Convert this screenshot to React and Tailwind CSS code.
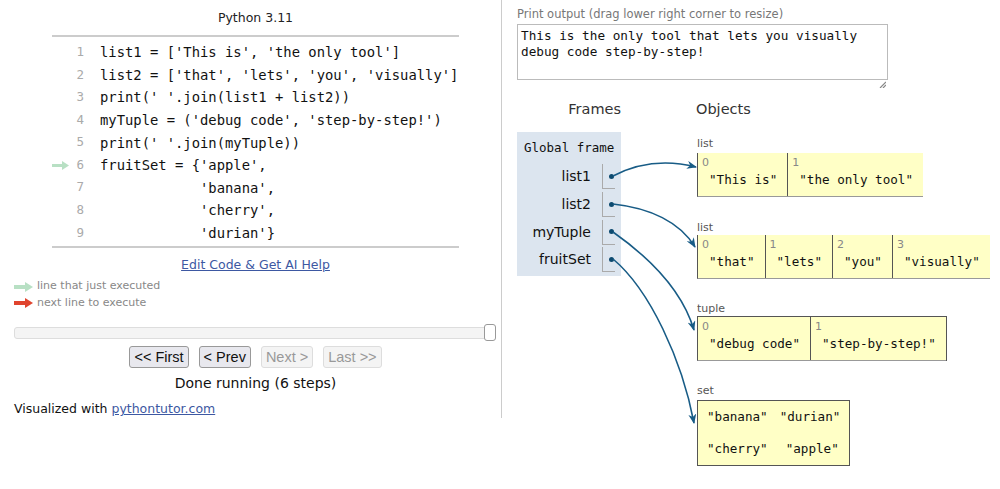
import React from 'react';

const mono = { fontFamily: '"DejaVu Sans Mono", "Liberation Mono", monospace' };
const sans = { fontFamily: '"DejaVu Sans", Verdana, sans-serif' };
const arial = { fontFamily: '"Liberation Sans", Arial, sans-serif' };

const code = [
  "list1 = ['This is', 'the only tool']",
  "list2 = ['that', 'lets', 'you', 'visually']",
  "print(' '.join(list1 + list2))",
  "myTuple = ('debug code', 'step-by-step!')",
  "print(' '.join(myTuple))",
  "fruitSet = {'apple',",
  "            'banana',",
  "            'cherry',",
  "            'durian'}",
];

function Arrow({ color }) {
  return (
    <svg width="19" height="10" viewBox="0 0 19 10" className="shrink-0">
      <rect x="0" y="3" width="12" height="4" fill={color} />
      <path d="M11 0 L19 5 L11 10 Z" fill={color} />
    </svg>
  );
}

function ListBox({ items }) {
  return (
    <div className="flex bg-[#ffffc6] border-l border-b border-l-[#555] border-b-[#999] w-fit">
      {items.map((v, i) => (
        <div key={i} className="border-r border-[#555] last:border-r-0 pl-[4px] pr-[10px] pt-[3px] pb-[8px]">
          <div className="text-[11px] leading-[13px] text-[#888]" style={sans}>{i}</div>
          <div className="text-[12.6px] leading-[16px] text-[#111] pl-[7px] mt-[3px]" style={mono}>{v}</div>
        </div>
      ))}
    </div>
  );
}

export default function App() {
  const rows = ['list1', 'list2', 'myTuple', 'fruitSet'];
  return (
    <div className="relative w-[1000px] h-[489px] bg-white overflow-hidden flex" style={sans}>
      {/* left panel */}
      <div className="w-[502px] h-[418px] border-r border-[#ccc] pl-[14px] pr-[4px] flex flex-col items-center">
        <div className="text-[12.5px] text-[#222] mt-[10px] leading-[16px]">Python 3.11</div>
        <div className="w-[407px] mt-[9px] border-t-2 border-b-2 border-[#ccc] pt-[4px] pb-[2px]">
          {code.map((line, i) => (
            <div key={i} className="flex items-center h-[22.6px]">
              <div className="w-[18px] flex-none flex justify-end pr-[1px]">
                {i === 5 && (
                  <svg width="17" height="9" viewBox="0 0 17 9">
                    <rect x="0" y="3" width="11" height="3" fill="#b8e0c4" />
                    <path d="M10 0 L17 4.5 L10 9 Z" fill="#b8e0c4" />
                  </svg>
                )}
              </div>
              <div className="w-[14px] flex-none text-right text-[12.5px] text-[#aaa]" style={mono}>{i + 1}</div>
              <pre className="flex-none ml-[16px] text-[13.85px] text-[#111] leading-[20px]" style={mono}>{line}</pre>
            </div>
          ))}
        </div>
        <a className="mt-[9px] text-[12.5px] text-[#3d58a2] underline leading-[16px]" href="#">Edit Code &amp; Get AI Help</a>
        <div className="self-start mt-[5px] text-[11px] text-[#888] leading-[16.5px]">
          <div className="flex items-center gap-[4px]"><Arrow color="#b8e0c4" />line that just executed</div>
          <div className="flex items-center gap-[4px]"><Arrow color="#e0442e" />next line to execute</div>
        </div>
        <div className="self-stretch mt-[13px] relative h-[17px] flex items-center">
          <div className="h-[12px] w-[474px] rounded-[3px] border border-[#ddd] bg-[#f4f4f4]"></div>
          <div className="absolute left-[470px] top-0 w-[12px] h-[17px] rounded-[3px] border border-[#999] bg-white"></div>
        </div>
        <div className="flex gap-[10px] mt-[5px]" style={arial}>
          <button className="h-[22px] px-[4px] rounded-[3px] border border-[#999] bg-[#e8e8ee] text-[14.5px] text-[#111]">&lt;&lt; First</button>
          <button className="h-[22px] px-[4px] rounded-[3px] border border-[#999] bg-[#e8e8ee] text-[14.5px] text-[#111]">&lt; Prev</button>
          <button className="h-[22px] px-[4px] rounded-[3px] border border-[#ddd] bg-[#f4f4f4] text-[14.5px] text-[#999]">Next &gt;</button>
          <button className="h-[22px] px-[4px] rounded-[3px] border border-[#ddd] bg-[#f4f4f4] text-[14.5px] text-[#999]">Last &gt;&gt;</button>
        </div>
        <div className="mt-[5px] text-[14px] text-[#111] leading-[20px]">Done running (6 steps)</div>
        <div className="self-start mt-[8px] text-[12.5px] text-[#111] leading-[16px]">
          Visualized with <a className="text-[#3d58a2] underline" href="#">pythontutor.com</a>
        </div>
      </div>

      {/* right panel */}
      <div className="flex-1 pl-[15px] flex flex-col">
        <div className="mt-[6px] text-[11.5px] text-[#777] leading-[16px]">Print output (drag lower right corner to resize)</div>
        <div className="relative w-[371px] h-[56px] mt-[2px] border border-[#bbb] px-[3px] py-[3px]">
          <div className="text-[12.7px] leading-[16px] text-[#111] whitespace-pre" style={mono}>{'This is the only tool that lets you visually\ndebug code step-by-step!'}</div>
          <svg className="absolute right-[1px] -bottom-[9px]" width="7" height="7" viewBox="0 0 7 7">
            <path d="M1 7 L7 1 M4 7 L7 4" stroke="#888" strokeWidth="1.2" />
          </svg>
        </div>
        <div className="flex mt-[20px] text-[14.5px] text-[#333] leading-[18px]">
          <div className="w-[104px] text-right">Frames</div>
          <div className="ml-[75px]">Objects</div>
        </div>
        <div className="flex mt-[14px]">
          <div className="w-[104px] h-[144px] bg-[#dce5ef] pt-[8px]">
            <div className="text-[12.5px] leading-[16px] text-[#111] pl-[7px]" style={mono}>Global frame</div>
            <div className="mt-[7px]">
              {rows.map((r) => (
                <div key={r} className="flex items-center h-[27.7px]">
                  <div className="w-[74px] text-right text-[14px] text-[#111]">{r}</div>
                  <div className="ml-[11px] w-[13px] h-[25px] border-l border-b border-[#aaa] flex items-center justify-end">
                    <div className="w-[5px] h-[5px] rounded-full bg-[#0d4a6f] mr-[1px]"></div>
                  </div>
                </div>
              ))}
            </div>
          </div>
          <div className="ml-[76px] flex flex-col items-start">
            <div className="text-[11px] leading-[13px] text-[#555] mt-[5px]">list</div>
            <div className="mt-[3px]"><ListBox items={['"This is"', '"the only tool"']} /></div>
            <div className="text-[11px] leading-[13px] text-[#555] mt-[24px]">list</div>
            <div className="mt-[1px]"><ListBox items={['"that"', '"lets"', '"you"', '"visually"']} /></div>
            <div className="text-[11px] leading-[13px] text-[#555] mt-[23px]">tuple</div>
            <div className="mt-[1px] border-t border-r border-[#555]"><ListBox items={['"debug code"', '"step-by-step!"']} /></div>
            <div className="text-[11px] leading-[13px] text-[#555] mt-[23px]">set</div>
            <div className="mt-[3px] bg-[#ffffc6] border border-[#555] grid grid-cols-2 gap-x-[12px] gap-y-[16px] px-[9px] py-[8px] text-[12.6px] leading-[16px] text-[#111]" style={mono}>
              <div>"banana"</div><div>"durian"</div>
              <div>"cherry"</div><div className="pl-[6px]">"apple"</div>
            </div>
          </div>
        </div>
      </div>

      {/* pointer arrows */}
      <svg className="absolute left-0 top-0 pointer-events-none" width="1000" height="489">
        <defs>
          <marker id="ah" markerWidth="10" markerHeight="8" refX="9" refY="4" orient="auto" markerUnits="userSpaceOnUse">
            <path d="M0 0 L10 4 L0 8 L3 4 Z" fill="#185c86" />
          </marker>
        </defs>
        <g stroke="#185c86" strokeWidth="1.6" fill="none" markerEnd="url(#ah)">
          <path d="M613 176 C640 162 668 160 696 167" />
          <path d="M613 204 C650 208 680 222 695 247" />
          <path d="M613 232 C650 258 682 290 694 330" />
          <path d="M613 259 C650 290 682 360 694 423" />
        </g>
      </svg>
    </div>
  );
}
